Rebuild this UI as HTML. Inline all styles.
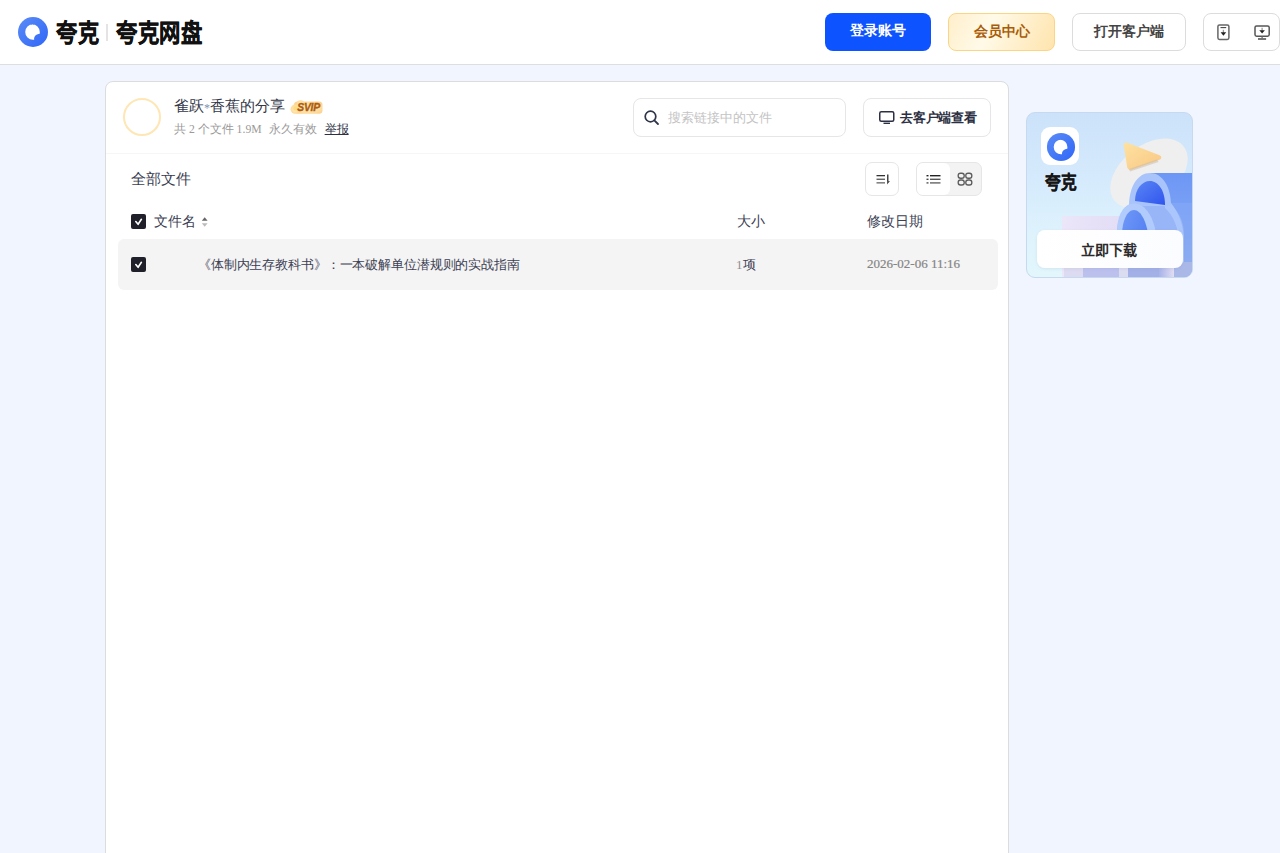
<!DOCTYPE html>
<html>
<head>
<meta charset="utf-8">
<style>
*{box-sizing:border-box;margin:0;padding:0}
html,body{width:1280px;height:853px;overflow:hidden}
body{background:#f0f5ff;font-family:"Liberation Serif",serif;position:relative;color:#262b3f}
.a{position:absolute;white-space:nowrap}
#hdr{position:absolute;left:0;top:0;width:1280px;height:65px;background:#fff;border-bottom:1px solid #dedede}
.btn{position:absolute;top:13px;height:38px;border-radius:8px;font-size:14px;font-weight:bold;text-align:center;line-height:36px}
#card{position:absolute;left:105px;top:81px;width:904px;height:800px;background:#fff;border:1px solid #dcdcdc;border-radius:8px}
.box{position:absolute;border:1px solid #e6e6e6;border-radius:8px;background:#fff}
.chk{position:absolute;width:15px;height:15px;background:#1f2029;border-radius:2px}
.chk svg{position:absolute;left:0;top:0}
</style>
</head>
<body>
<div id="hdr">
  <svg class="a" style="left:17px;top:16px" width="32" height="32" viewBox="0 0 32 32">
    <defs><linearGradient id="lg1" x1="0" y1="0" x2="1" y2="1"><stop offset="0" stop-color="#5b8cf6"/><stop offset="1" stop-color="#2f66f8"/></linearGradient></defs>
    <circle cx="16" cy="16" r="15" fill="url(#lg1)"/>
    <path d="M16 8.2a7.8 7.8 0 1 0 0 15.6c0.5 0 1-0.05 1.2-0.1c-0.6-2.6 1.6-5.6 5.5-5.9c0.05-0.4 0.1-0.6 0.1-1.8a7.8 7.8 0 0 0-7.8-7.8z" fill="#fff"/>
  </svg>
  <div lang="zh-CN" class="a" style="left:56px;top:12px;font-size:25.5px;font-weight:bold;color:#111;font-family:'Liberation Sans',sans-serif;-webkit-text-stroke:0.4px #111;transform:scaleX(0.83);transform-origin:0 0">夸克</div>
  <div class="a" style="left:106px;top:24px;width:2px;height:17px;background:#e4e4e4"></div>
  <div lang="zh-CN" class="a" style="left:116px;top:12px;font-size:25.5px;font-weight:bold;color:#111;font-family:'Liberation Sans',sans-serif;-webkit-text-stroke:0.4px #111;transform:scaleX(0.835);transform-origin:0 0">夸克网盘</div>

  <div class="btn" style="left:825px;width:106px;background:#0d53ff;color:#fff">登录账号</div>
  <div class="btn" style="left:948px;width:107px;background:linear-gradient(115deg,#ffefcb 0%,#fffae8 38%,#ffe4ad 100%);border:1px solid #fcd584;color:#a85c08">会员中心</div>
  <div class="btn" style="left:1072px;width:114px;background:#fff;border:1px solid #dcdcdc;color:#444">打开客户端</div>
  <div class="btn" style="left:1203px;width:77px;background:#fff;border:1px solid #dcdcdc"></div>
  <svg class="a" style="left:1216px;top:23px" width="15" height="18" viewBox="0 0 15 18">
    <rect x="1.9" y="1.9" width="11" height="14.5" rx="1.6" fill="none" stroke="#666" stroke-width="1.5"/>
    <line x1="4.5" y1="4.6" x2="10.2" y2="4.6" stroke="#444" stroke-width="1.1"/>
    <line x1="7.4" y1="6.8" x2="7.4" y2="10" stroke="#999" stroke-width="1.3"/>
    <path d="M4.6 9.3h5.6l-2.8 3.4z" fill="#222"/>
  </svg>
  <svg class="a" style="left:1253px;top:24px" width="18" height="17" viewBox="0 0 18 17">
    <rect x="2" y="2" width="14.2" height="10.2" rx="1.6" fill="none" stroke="#555" stroke-width="1.5"/>
    <line x1="9.1" y1="3.8" x2="9.1" y2="6.8" stroke="#999" stroke-width="1.3"/>
    <path d="M6.3 6.3h5.6l-2.8 3.3z" fill="#222"/>
    <line x1="9.1" y1="12.3" x2="9.1" y2="14.3" stroke="#666" stroke-width="1.2"/>
    <line x1="5" y1="15" x2="13.1" y2="15" stroke="#555" stroke-width="1.6"/>
  </svg>
</div>

<div id="card">
  <div class="a" style="left:17px;top:16px;width:38px;height:38px;border-radius:50%;border:2px solid #fee6b5"></div>
  <div class="a" style="left:68px;top:14.5px;font-size:15px;color:#333749">雀跃<span style="font-size:12px;color:#7f8fb3;position:relative;top:1px">*</span>香蕉的分享</div>
  <svg class="a" style="left:184px;top:17px" width="34" height="16" viewBox="0 0 34 16">
    <defs><radialGradient id="sv" cx="0.5" cy="0.5" r="0.6"><stop offset="0" stop-color="#ffefc4"/><stop offset="0.7" stop-color="#ffdc98"/><stop offset="1" stop-color="#fdd08a"/></radialGradient></defs>
    <g fill="url(#sv)" opacity="0.95">
      <rect x="4" y="2.6" width="28.5" height="12.2" rx="3.5"/>
      <circle cx="10.5" cy="5" r="3.8"/>
      <circle cx="5.2" cy="10.2" r="4.6"/>
    </g>
    <circle cx="5.5" cy="9.5" r="2.2" fill="#ffd46a" opacity="0.7"/>
    <text x="18.6" y="12" text-anchor="middle" font-family="Liberation Sans" font-weight="bold" font-style="italic" font-size="10.4" fill="#ad5c10" stroke="#ad5c10" stroke-width="0.35" letter-spacing="-0.3">SVIP</text>
  </svg>
  <div class="a" style="left:68px;top:39.5px;font-size:11.7px;color:#9a9a9a">共 2 个文件 1.9M<span style="margin-left:7px">永久有效</span><span style="margin-left:8px;color:#2c3045;text-decoration:underline">举报</span></div>

  <div class="box" style="left:527px;top:16px;width:213px;height:39px"></div>
  <svg class="a" style="left:538px;top:28px" width="16" height="16" viewBox="0 0 16 16">
    <circle cx="6.5" cy="6.5" r="5.3" fill="none" stroke="#2f3448" stroke-width="1.7"/>
    <line x1="10.3" y1="10.3" x2="14" y2="14" stroke="#2f3448" stroke-width="1.8" stroke-linecap="round"/>
  </svg>
  <div class="a" style="left:562px;top:27.5px;font-size:12.75px;color:#c4c4c4">搜索链接中的文件</div>

  <div class="box" style="left:757px;top:16px;width:128px;height:39px"></div>
  <svg class="a" style="left:773px;top:29px" width="16" height="14" viewBox="0 0 16 14">
    <rect x="0.75" y="0.75" width="14" height="9.5" rx="1.5" fill="none" stroke="#2c3042" stroke-width="1.5"/>
    <line x1="4.5" y1="12.3" x2="11" y2="12.3" stroke="#2c3042" stroke-width="1.4"/>
  </svg>
  <div class="a" style="left:794px;top:27px;font-size:13px;font-weight:bold;letter-spacing:-0.25px;color:#2c3042">去客户端查看</div>

  <div class="a" style="left:0;top:71px;width:902px;height:1px;background:#f6f6f6"></div>

  <div class="a" style="left:25px;top:88px;font-size:15px;color:#3a3e52">全部文件</div>
  <div class="box" style="left:759px;top:80px;width:34px;height:34px;border-radius:7px"></div>
  <svg class="a" style="left:769.5px;top:92px" width="16" height="12" viewBox="0 0 16 12">
    <rect x="0.5" y="1" width="8.5" height="1.3" fill="#333"/>
    <rect x="0.5" y="4.6" width="8.5" height="1.3" fill="#555"/>
    <rect x="0.5" y="8.2" width="8.5" height="1.3" fill="#666"/>
    <rect x="11" y="0.5" width="1.5" height="8.5" fill="#444"/>
    <path d="M11 7h3l-3 3.6z" fill="#555"/>
  </svg>
  <div class="a" style="left:810px;top:80px;width:66px;height:34px;border-radius:7px;border:1px solid #e6e6e6;background:#f3f3f3"></div>
  <div class="a" style="left:811px;top:81px;width:33px;height:32px;border-radius:6px;background:#fff"></div>
  <svg class="a" style="left:820px;top:92px" width="16" height="12" viewBox="0 0 16 12">
    <rect x="0.5" y="1" width="2" height="1.4" fill="#222"/><rect x="4" y="1" width="10.5" height="1.4" fill="#222"/>
    <rect x="0.5" y="4.6" width="2" height="1.4" fill="#444"/><rect x="4" y="4.6" width="10.5" height="1.4" fill="#555"/>
    <rect x="0.5" y="8.2" width="2" height="1.4" fill="#555"/><rect x="4" y="8.2" width="10.5" height="1.4" fill="#666"/>
  </svg>
  <svg class="a" style="left:851px;top:90px" width="17" height="15" viewBox="0 0 17 15">
    <rect x="1.2" y="1.2" width="6" height="5" rx="2.3" fill="none" stroke="#5c5c5c" stroke-width="1.35"/>
    <rect x="8.8" y="1.2" width="6" height="5" rx="2.3" fill="none" stroke="#5c5c5c" stroke-width="1.35"/>
    <rect x="1.2" y="8" width="6" height="5" rx="2.3" fill="none" stroke="#5c5c5c" stroke-width="1.35"/>
    <rect x="8.8" y="8" width="6" height="5" rx="2.3" fill="none" stroke="#5c5c5c" stroke-width="1.35"/>
  </svg>

  <div class="chk" style="left:25px;top:132px"><svg width="15" height="15" viewBox="0 0 15 15"><path d="M4.8 7.5l2.3 2.8 3.3-5" fill="none" stroke="#fff" stroke-width="1.6" stroke-linecap="round" stroke-linejoin="round"/></svg></div>
  <div class="a" style="left:48px;top:130.5px;font-size:14px;color:#3c4053">文件名</div>
  <svg class="a" style="left:95px;top:134px" width="8" height="12" viewBox="0 0 8 12">
    <path d="M0.8 4.8L3.7 1.2 6.6 4.8z" fill="#666"/>
    <path d="M0.8 7.2L3.7 10.8 6.6 7.2z" fill="#bbb"/>
  </svg>
  <div class="a" style="left:631px;top:130.5px;font-size:14px;color:#3c4053">大小</div>
  <div class="a" style="left:761px;top:130.5px;font-size:14px;color:#3c4053">修改日期</div>

  <div class="a" style="left:12px;top:157px;width:880px;height:51px;background:#f4f4f4;border-radius:6px"></div>
  <div class="chk" style="left:25px;top:175px"><svg width="15" height="15" viewBox="0 0 15 15"><path d="M4.8 7.5l2.3 2.8 3.3-5" fill="none" stroke="#fff" stroke-width="1.6" stroke-linecap="round" stroke-linejoin="round"/></svg></div>
  <div class="a" style="left:92px;top:174px;font-size:13px;letter-spacing:-0.13px;color:#3c4053;text-spacing-trim:space-all">《体制内生存教科书》：一本破解单位潜规则的实战指南</div>
  <div class="a" style="left:630px;top:174px;font-size:13px;color:#3c4053"><span style="color:#8f8f8f">1</span>项</div>
  <div class="a" style="left:761px;top:173.5px;font-size:13px;color:#858585;-webkit-text-stroke:0.2px #858585">2026-02-06 11:16</div>
</div>

<div class="a" style="left:1026px;top:112px;width:167px;height:166px;border-radius:9px;overflow:hidden;border:1px solid #c6d9ef;background:linear-gradient(180deg,#cce2fa 0%,#d6ebfc 45%,#dff3fd 75%,#e2f6fc 100%)">
  <svg class="a" style="left:-1px;top:-1px" width="167" height="166" viewBox="1026 112 167 166">
    <defs>
      <linearGradient id="blk" x1="0" y1="0" x2="0" y2="1"><stop offset="0" stop-color="#6d97f6"/><stop offset="0.45" stop-color="#7ea3f4"/><stop offset="0.75" stop-color="#8faee9"/><stop offset="1" stop-color="#a8b6e3"/></linearGradient>
      <linearGradient id="lav" x1="0" y1="0" x2="1" y2="0"><stop offset="0" stop-color="#ebe6f8"/><stop offset="1" stop-color="#e3ddf6"/></linearGradient>
      <linearGradient id="tri" x1="0" y1="0" x2="1" y2="1"><stop offset="0" stop-color="#fee2a0"/><stop offset="1" stop-color="#f9c785"/></linearGradient>
      <linearGradient id="inn" x1="0" y1="0" x2="1" y2="1"><stop offset="0" stop-color="#5a86f4"/><stop offset="1" stop-color="#2f55ee"/></linearGradient>
      <linearGradient id="inn2" x1="0" y1="0" x2="1" y2="1"><stop offset="0" stop-color="#6f98f5"/><stop offset="1" stop-color="#4674f2"/></linearGradient>
      <linearGradient id="wb" x1="0" y1="0" x2="1" y2="0"><stop offset="0" stop-color="#a8b3e8"/><stop offset="1" stop-color="#e2def3"/></linearGradient>
      <linearGradient id="bot" x1="0" y1="0" x2="1" y2="0"><stop offset="0" stop-color="#d9d7f2"/><stop offset="0.5" stop-color="#b9c2ec"/><stop offset="1" stop-color="#a9b4e6"/></linearGradient>
    </defs>
    <rect x="1062" y="216" width="58" height="62" fill="url(#lav)"/>
        <ellipse cx="1149" cy="173.5" rx="44" ry="28" transform="rotate(-38 1149 173.5)" fill="#efefef"/>
    <path d="M1124 147c-1.5-3.5 1-5 4-4l31 12c3 1.2 3 3.8 0 5l-27 9.5c-3 1-5-0.5-5-3.5z" fill="url(#tri)"/>
    <path d="M1129 169l28-9.5 1.5 2.5-28.5 9.5z" fill="#c9b9a6" opacity="0.5"/>
    <path d="M1150 173h43v105h-43z" fill="url(#blk)"/>
    <rect x="1150" y="203" width="43" height="75" fill="#86a9f7" opacity="0.6"/>
    <path d="M1117 278V235C1117 215 1125 203 1135 203H1168C1178 210 1184 220 1184 235V278Z" fill="#98b5f8"/>
    <path d="M1165 203L1171 203C1178 212 1184 224 1184 242V278H1179V244C1179 228 1173 215 1165 208Z" fill="#abc6fb"/>
    <path d="M1129 206C1129 186 1138 173 1150 173C1162 173 1171 186 1171 206Z" fill="#a8c4fb"/>
    <path d="M1135 201C1135 189 1142 181 1150 181C1158 181 1165 190 1165 205Z" fill="url(#inn)"/>
    <path d="M1117 278V232C1117 215 1124 203.5 1134 203.5C1144 203.5 1151 213 1155 228L1158 278Z" fill="#b0cbfc"/>
    <path d="M1122 278V236C1122 221 1127 210 1134 210C1141 210 1147 222 1149 240V278Z" fill="url(#inn2)"/>
    <rect x="1064" y="262" width="19" height="16" fill="#dddbf1"/>
    <rect x="1083" y="262" width="36" height="16" fill="#bcc0ed"/>
    <rect x="1119" y="262" width="9" height="16" fill="#dcdcf1"/>
    <rect x="1128" y="262" width="31" height="16" fill="#a3b0e7"/>
    <rect x="1159" y="262" width="15" height="16" fill="url(#wb)"/>
    <rect x="1174" y="262" width="19" height="16" fill="#aab8e8"/>
  </svg>
  <div class="a" style="left:14px;top:14px;width:38px;height:38px;border-radius:9px;background:#fff"></div>
  <svg class="a" style="left:18.5px;top:18.5px" width="30" height="30" viewBox="0 0 32 32">
    <defs><linearGradient id="lg2" x1="0" y1="0" x2="1" y2="1"><stop offset="0" stop-color="#5b8cf6"/><stop offset="1" stop-color="#2f66f8"/></linearGradient></defs>
    <circle cx="16" cy="16" r="15" fill="url(#lg2)"/>
    <path d="M16 8.2a7.8 7.8 0 1 0 0 15.6c0.5 0 1-0.05 1.2-0.1c-0.6-2.6 1.6-5.6 5.5-5.9c0.05-0.4 0.1-0.6 0.1-1.8a7.8 7.8 0 0 0-7.8-7.8z" fill="#fff"/>
  </svg>
  <div lang="zh-CN" class="a" style="left:17.5px;top:54.5px;font-size:18px;font-weight:bold;color:#161616;font-family:'Liberation Sans',sans-serif;-webkit-text-stroke:0.3px #161616;transform:scaleX(0.87);transform-origin:0 0">夸克</div>
  <div class="a" style="left:10px;top:117px;width:146px;height:38px;border-radius:8px;background:linear-gradient(90deg,#fff,#fbfcff);box-shadow:0 1px 3px rgba(120,140,190,0.15)"></div>
  <div lang="zh-CN" class="a" style="left:54px;top:125.5px;font-size:14px;font-weight:bold;color:#2b2b2b;font-family:'Liberation Sans',sans-serif">立即下载</div>
</div>

</body>
</html>
